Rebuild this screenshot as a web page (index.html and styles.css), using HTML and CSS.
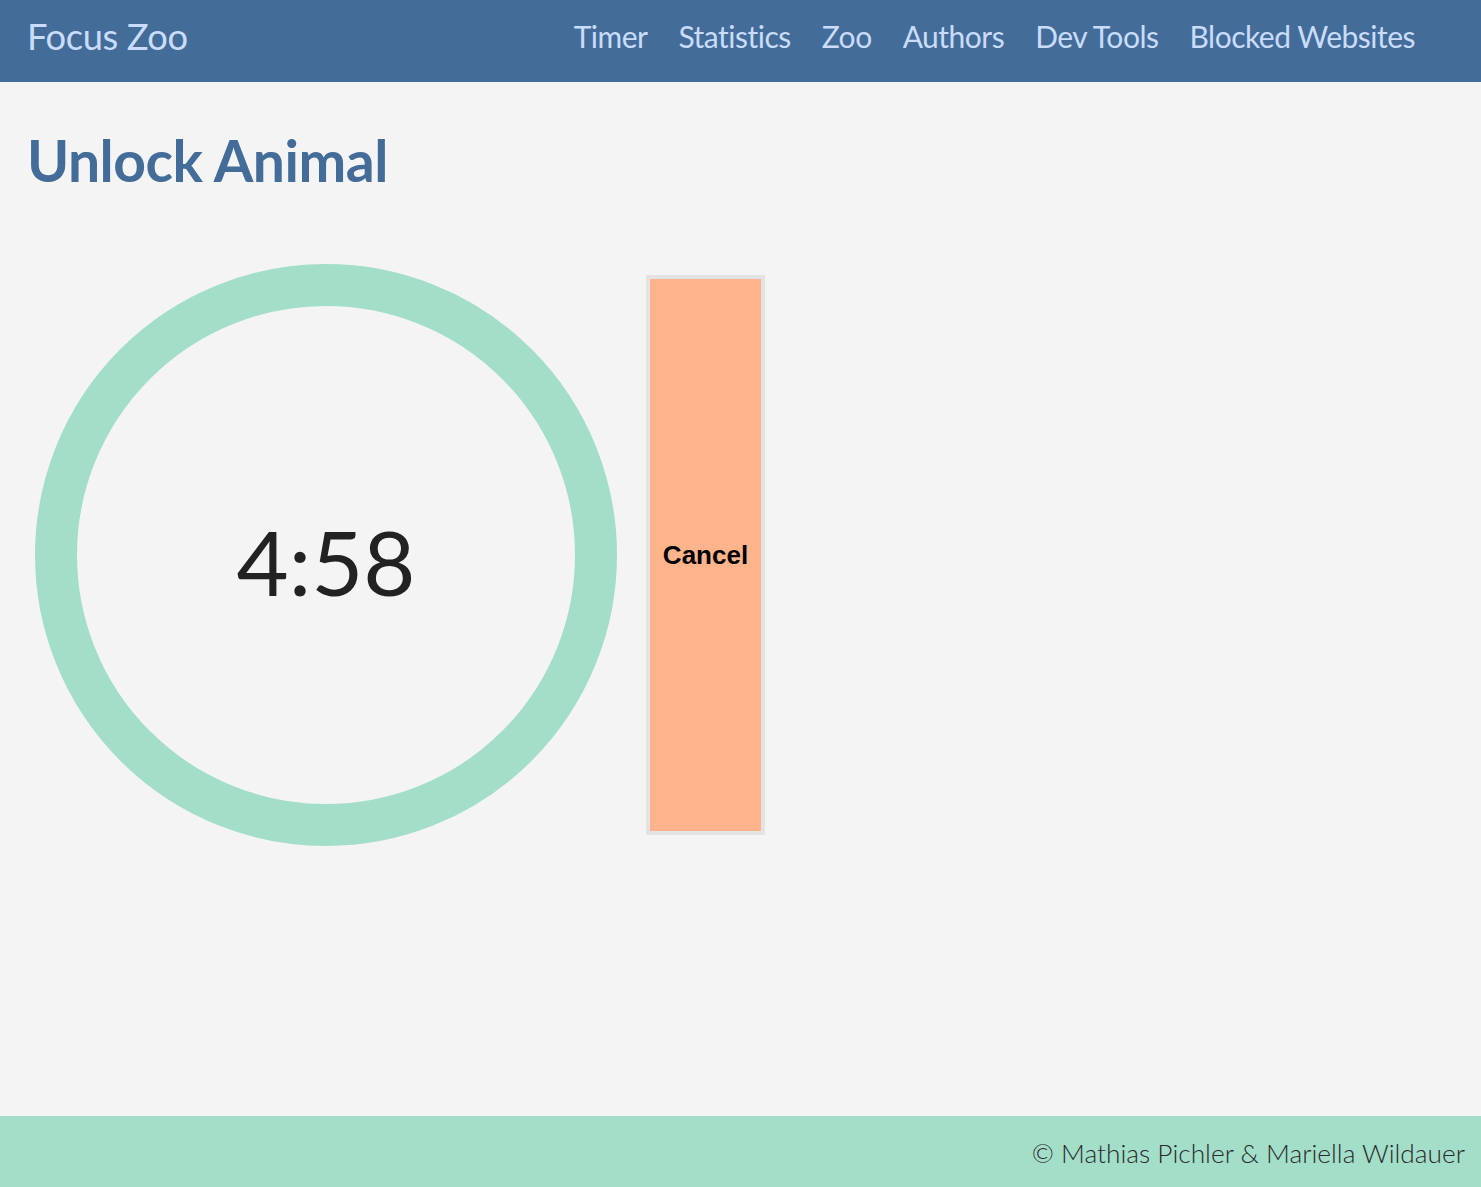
FILE: index.html
```html
<!DOCTYPE html>
<html>
<head>
<meta charset="utf-8">
<link rel="stylesheet" href="styles.css">
</head>
<body>
<header class="navbar">
  <a class="brand" href="#">Focus Zoo</a>
  <nav class="nav">
    <a href="#">Timer</a>
    <a href="#">Statistics</a>
    <a href="#">Zoo</a>
    <a href="#">Authors</a>
    <a href="#">Dev Tools</a>
    <a href="#">Blocked Websites</a>
  </nav>
</header>
<main class="main">
  <h1 class="title">Unlock Animal</h1>
  <div class="timer-row">
    <div class="ring"><span class="time">4:58</span></div>
    <button class="cancel">Cancel</button>
  </div>
</main>
<footer class="footer">© Mathias Pichler &amp; Mariella Wildauer</footer>
</body>
</html>
```
FILE: styles.css
```css
* { box-sizing: border-box; }
html, body { margin: 0; padding: 0; }
body {
  background: #f4f4f4;
  font-family: Lato, "Open Sans", sans-serif;
  min-height: 100vh;
  display: flex;
  flex-direction: column;
}
.navbar {
  height: 82px;
  background: #436c99;
  display: flex;
  align-items: center;
  justify-content: space-between;
  padding: 0 66px 11px 27px;
}
.brand {
  color: #c9dcfb;
  text-decoration: none;
  font-size: 36.3px;
  letter-spacing: -0.4px;
}
.nav { display: flex; gap: 31px; }
.nav a {
  color: #c9dcfb;
  text-decoration: none;
  font-size: 30px;
  letter-spacing: -0.5px;
}
.main { flex: 1; padding: 0 27px; }
.title {
  margin: 46px 0 0;
  font-size: 57px;
  line-height: 64px;
  font-weight: 700;
  color: #436c99;
  letter-spacing: -0.5px;
}
.timer-row {
  display: flex;
  align-items: center;
  gap: 29px;
  margin-top: 72px;
  padding-left: 8px;
}
.ring {
  width: 582px;
  height: 582px;
  border-radius: 50%;
  border: 42px solid #a3dec9;
  display: flex;
  align-items: center;
  justify-content: center;
}
.time {
  font-size: 90px;
  font-weight: 400;
  color: #222;
  line-height: 1;
  margin-top: 12px;
}
.cancel {
  width: 119px;
  height: 560px;
  background: #ffb48c;
  border: 4px solid #e3e3e3;
  font-family: "Liberation Sans", Arial, sans-serif;
  font-weight: 700;
  font-size: 26px;
  color: #000;
  padding: 0;
}
.footer {
  height: 71px;
  background: #a3dec9;
  display: flex;
  align-items: center;
  justify-content: flex-end;
  padding: 2px 16px 0 0;
  color: #2a2a2a;
  font-size: 26.3px;
  font-weight: 300;
}
```
